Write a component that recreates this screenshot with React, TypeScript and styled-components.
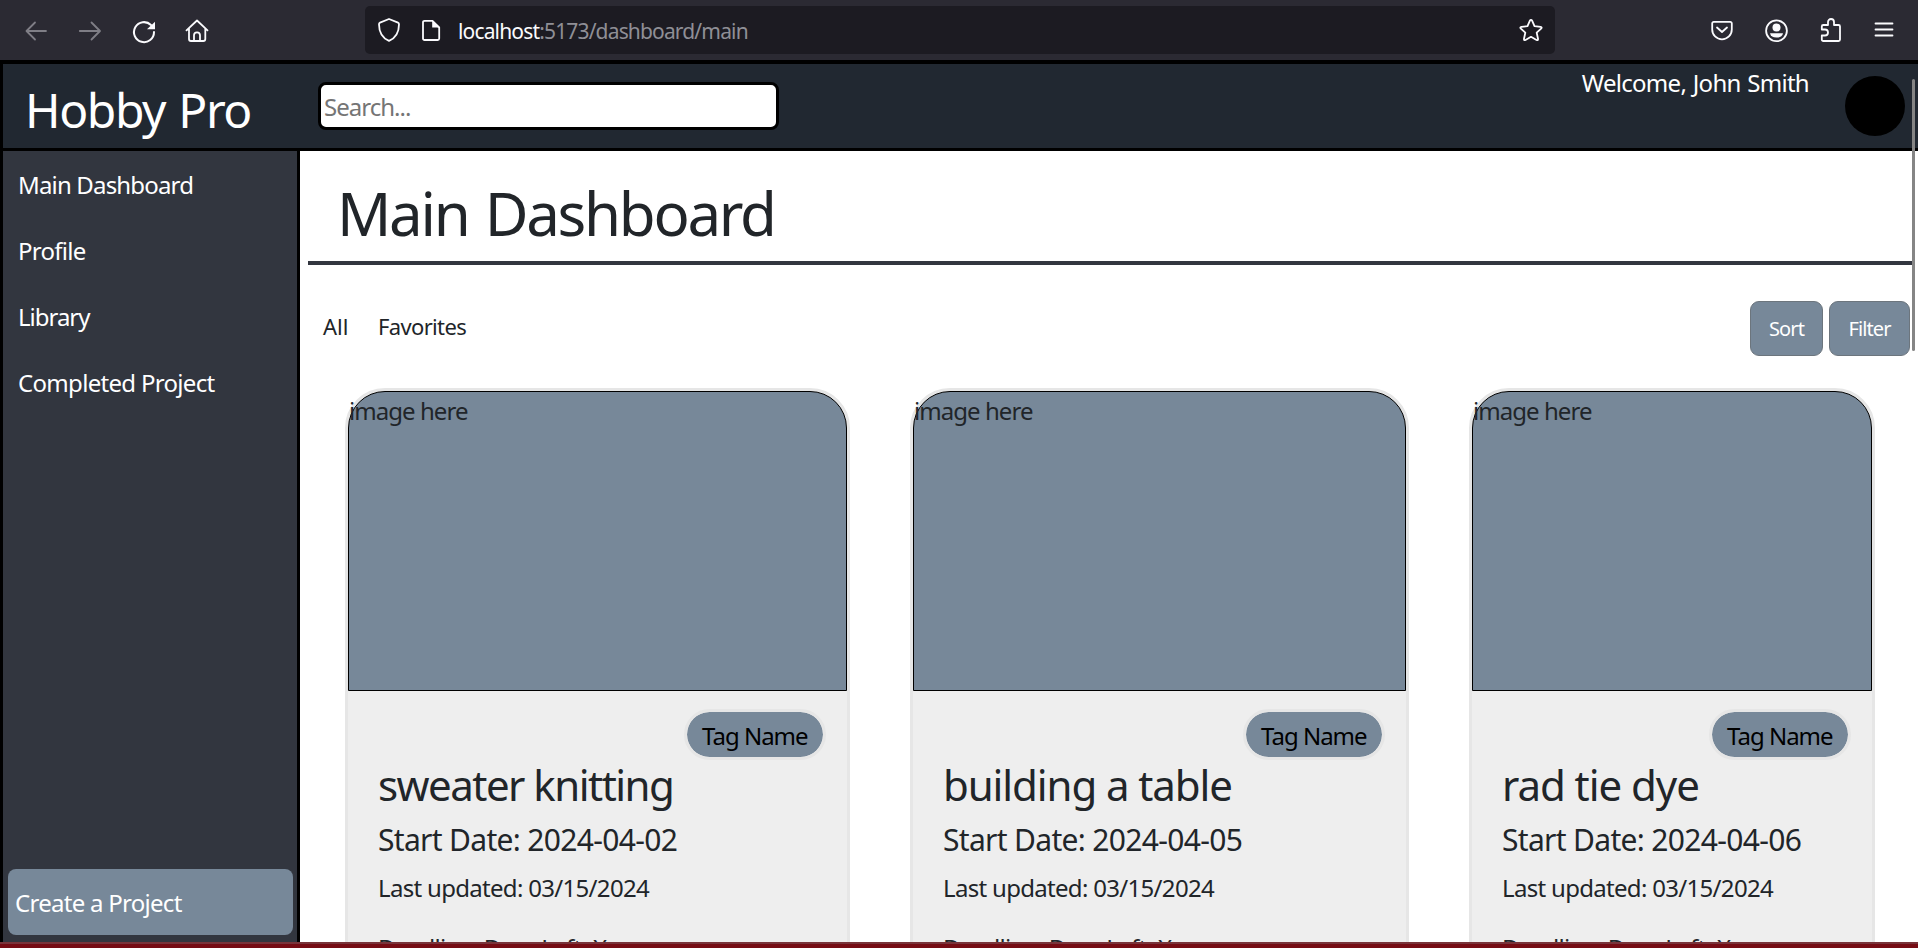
import React from 'react';
import styled, { createGlobalStyle } from 'styled-components';

const GlobalStyle = createGlobalStyle`
  *, *::before, *::after { box-sizing: border-box; }
  body {
    margin: 0;
    overflow: hidden;
    background: #fff;
    color: #212529;
    font-family: 'Noto Sans', 'Open Sans', sans-serif;
  }
  h1, h2, h3, p, ul { margin: 0; padding: 0; font-weight: 400; }
`;

const Window = styled.div`
  position: relative;
  display: flex;
  flex-direction: column;
  width: 1918px;
  height: 948px;
  overflow: hidden;
`;

/* Browser toolbar */
const Toolbar = styled.div`
  flex: none;
  display: flex;
  align-items: center;
  justify-content: space-between;
  height: 60px;
  padding: 0 22px 0 24px;
  background: #2b2a33;
`;

const IconGroup = styled.div`
  display: flex;
  gap: 30px;
`;

const Glyph = styled.svg<{ $dim?: boolean; $left?: number }>`
  flex: none;
  width: 24px;
  height: 24px;
  margin-left: ${(p) => p.$left ?? 0}px;
  overflow: visible;
  fill: none;
  stroke: ${(p) => (p.$dim ? '#7f7e86' : '#fbfbfe')};
  stroke-width: 1.8;
  stroke-linecap: round;
  stroke-linejoin: round;

  .solid { fill: #fbfbfe; stroke: none; }
`;

const AddressBar = styled.div`
  display: flex;
  align-items: center;
  width: 1190px;
  height: 48px;
  margin-right: -1px;
  padding: 0 12px;
  border-radius: 5px;
  background: #1c1b22;
`;

const Address = styled.div`
  flex: 1;
  padding: 1px 0 0 15px;
  font-size: 21px;
  line-height: 30px;
  letter-spacing: -0.84px;
  white-space: pre;
  color: #8f8f96;
`;

const Host = styled.span`
  color: #fbfbfe;
`;

/* Application frame */
const AppFrame = styled.div`
  flex: 1;
  min-height: 0;
  display: flex;
  flex-direction: column;
  border-top: 4px solid #000;
  border-left: 3px solid #000;
`;

const Header = styled.header`
  flex: none;
  display: flex;
  align-items: flex-start;
  height: 87px;
  border-bottom: 3px solid #000;
  background: #212831;
  color: #fff;
`;

const Brand = styled.div`
  width: 315px;
  padding: 4px 0 0 22px;
  font-size: 48px;
  line-height: 84px;
  letter-spacing: -1.4px;
  word-spacing: 2px;
`;

const SearchBox = styled.input`
  width: 461px;
  height: 48px;
  margin-top: 18px;
  padding: 1px 3px 0;
  border: 3px solid #000;
  border-radius: 8px;
  outline: none;
  background: #fff;
  font: 24px 'Noto Sans', sans-serif;
  letter-spacing: -0.98px;

  &::placeholder { color: #757575; opacity: 1; }
`;

const Account = styled.div`
  display: flex;
  gap: 36px;
  margin-left: auto;
  padding-right: 13px;
`;

const Welcome = styled.span`
  padding-top: 1px;
  font-size: 24px;
  line-height: 36px;
  letter-spacing: -0.7px;
  word-spacing: 1px;
`;

const Avatar = styled.div`
  width: 60px;
  height: 60px;
  margin-top: 12px;
  border-radius: 50%;
  background: #000;
`;

const Body = styled.div`
  flex: 1;
  min-height: 0;
  display: flex;
`;

const Sidebar = styled.nav`
  flex: none;
  display: flex;
  flex-direction: column;
  justify-content: space-between;
  width: 297px;
  padding: 1px 4px 7px 5px;
  border-right: 3px solid #000;
  background: #32363f;
`;

const NavList = styled.ul`
  list-style: none;
`;

const NavItem = styled.li<{ $track: number }>`
  height: 66px;
  padding-left: 10px;
  font-size: 24px;
  line-height: 66px;
  letter-spacing: ${(p) => p.$track}px;
  color: #fff;
`;

const CreateLink = styled.a`
  height: 66px;
  padding: 1px 7px 0;
  border-radius: 8px;
  background: #778899;
  color: #fff;
  font-size: 24px;
  line-height: 66px;
  letter-spacing: -0.72px;
`;

const Content = styled.main`
  flex: 1;
  min-width: 0;
  padding-left: 8px;
`;

const PageHeading = styled.div`
  width: 1604px;
  padding: 17px 0 3px 29px;
  border-bottom: 4px solid #32363f;
`;

const PageTitle = styled.h1`
  font-size: 60px;
  line-height: 90px;
  letter-spacing: -2.3px;
  word-spacing: 3px;
`;

const FilterRow = styled.div`
  display: flex;
  align-items: center;
  height: 55px;
  width: 1602px;
  margin-top: 36px;
  padding-left: 15px;
`;

const Tab = styled.span<{ $track: number; $width: number }>`
  width: ${(p) => p.$width}px;
  padding-bottom: 4px;
  font-size: 22px;
  line-height: 33px;
  letter-spacing: ${(p) => p.$track}px;
`;

const Actions = styled.div`
  display: flex;
  gap: 6px;
  margin-left: auto;
`;

const ActionButton = styled.button<{ $width: number }>`
  width: ${(p) => p.$width}px;
  height: 55px;
  padding: 0;
  border: 1px solid #6c757d;
  border-radius: 9px;
  background: #778899;
  color: #fff;
  font: 20px/30px 'Noto Sans', sans-serif;
  letter-spacing: -0.9px;
`;

const CardRow = styled.div`
  display: flex;
  gap: 60px;
  margin: 32px 0 0 37px;
`;

const Card = styled.article<{ $width: number }>`
  flex: none;
  width: ${(p) => p.$width}px;
  height: 640px;
  border: 3px solid #e6e6e6;
  border-radius: 40px;
  background: #eee;
`;

const CardImage = styled.div`
  height: 300px;
  padding-top: 1px;
  border: 1px solid #000;
  border-radius: 37px 37px 0 0;
  background: #778899;
  font-size: 24px;
  line-height: 36px;
  letter-spacing: -0.95px;
`;

const CardBody = styled.div`
  display: flex;
  flex-direction: column;
  padding: 18px 21px 0 30px;
`;

const Tag = styled.span`
  align-self: flex-end;
  width: 142px;
  height: 51px;
  padding: 2px 0 0 15px;
  border: 3px solid #e6e6e6;
  border-radius: 26px;
  background: #778899;
  background-clip: padding-box;
  color: #000;
  font-size: 24px;
  line-height: 43px;
  letter-spacing: -1px;
`;

const CardTitle = styled.h2<{ $track: number }>`
  font-size: 42px;
  line-height: 50px;
  letter-spacing: ${(p) => p.$track}px;
`;

const StartDate = styled.h3`
  margin-top: 12px;
  font-size: 30px;
  line-height: 36px;
  letter-spacing: -0.68px;
`;

const Detail = styled.p<{ $space: number }>`
  margin-top: ${(p) => p.$space}px;
  font-size: 24px;
  line-height: 36px;
  letter-spacing: -0.69px;
`;

const ScrollThumb = styled.div`
  position: absolute;
  top: 79px;
  right: 3px;
  width: 3px;
  height: 272px;
  border-radius: 2px;
  background: #858585;
`;

const BottomStrip = styled.div`
  flex: none;
  height: 6px;
  border-top: 2px solid #79343a;
  background: #760c14;
`;

const navItems = [
  { label: 'Main Dashboard', track: -0.83 },
  { label: 'Profile', track: -0.72 },
  { label: 'Library', track: -1.02 },
  { label: 'Completed Project', track: -0.69 },
];

const projects = [
  { name: 'sweater knitting', start: '2024-04-02', width: 505, track: -1.52 },
  { name: 'building a table', start: '2024-04-05', width: 499, track: -1.1 },
  { name: 'rad tie dye', start: '2024-04-06', width: 406, track: -1.05 },
];

const BrowserToolbar = () => (
  <Toolbar>
    <IconGroup>
      <Glyph $dim><path d="M22 13H3M11 4.5L2.5 13L11 21.5" /></Glyph>
      <Glyph $dim><path d="M1.8 13H21.5M13.5 4.5L22 13L13.5 21.5" /></Glyph>
      <Glyph>
        <path d="M22 14A10 10 0 1 1 19 7" strokeWidth="2" />
        <path className="solid" d="M23 3.8V11.2H15Z" />
      </Glyph>
      <Glyph $left={-1}>
        <path d="M1.5 12.3L12 2.5L22.5 12.3M4 10.5V21a2 2 0 0 0 2 2h12.3a2 2 0 0 0 2-2V10.5M9 23v-5.7a3 3 0 0 1 6 0V23" />
      </Glyph>
    </IconGroup>
    <AddressBar>
      <Glyph>
        <path d="M12 1L21 4.6Q22 5 22 6.2C22 15 18.5 20 12 22.9C5.5 20 2 15 2 6.2Q2 5 3 4.6Z" />
      </Glyph>
      <Glyph $left={18}>
        <path d="M5.5 2.8H13.5L20.2 9.5V20.5a1.5 1.5 0 0 1-1.5 1.5H5.5A1.5 1.5 0 0 1 4 20.5V4.3A1.5 1.5 0 0 1 5.5 2.8Z" />
        <path className="solid" d="M13.2 2.2V9.5H20.8Z" />
      </Glyph>
      <Address>
        <Host>localhost</Host>:5173/dashboard/main
      </Address>
      <Glyph>
        <path d="M12 1.8Q12.7 1.8 13.1 2.6L15.5 8.2L21.6 8.8Q23.4 9.2 22.1 10.7L17.7 14.7L19 20.8Q19.2 22.7 17.5 22L12 18.8L6.5 22Q4.8 22.7 5 20.8L6.3 14.7L1.9 10.7Q.6 9.2 2.4 8.8L8.5 8.2L10.9 2.6Q11.3 1.8 12 1.8Z" />
      </Glyph>
    </AddressBar>
    <IconGroup>
      <Glyph>
        <path d="M3.7 3.9h16.6a1.5 1.5 0 0 1 1.5 1.5v6.1a9.8 9.8 0 0 1-19.6 0V5.4a1.5 1.5 0 0 1 1.5-1.5zM7 9.5l5 4.5 5-4.5" />
      </Glyph>
      <Glyph>
        <circle cx="12.5" cy="12.8" r="10.4" />
        <circle className="solid" cx="12.5" cy="9.6" r="4" />
        <path className="solid" d="M6 15.2H19Q18 19.5 12.5 19.5T6 15.2Z" />
      </Glyph>
      <Glyph>
        <path d="M3.8 11.5V8.5A1.5 1.5 0 0 1 5.3 7H10V4a3 3 0 0 1 6 0V7h4.5A1.5 1.5 0 0 1 22 8.5V21.5A1.5 1.5 0 0 1 20.5 23H5.3A1.5 1.5 0 0 1 3.8 21.5V17.5H7a3 3 0 0 0 0-6Z" />
      </Glyph>
      <Glyph><path d="M3.5 5.5H20.5M3.5 11.5H20.5M3.5 17.5H20.5" /></Glyph>
    </IconGroup>
  </Toolbar>
);

const ProjectCard = ({ name, start, width, track }: (typeof projects)[number]) => (
  <Card $width={width}>
    <CardImage>image here</CardImage>
    <CardBody>
      <Tag>Tag Name</Tag>
      <CardTitle $track={track}>{name}</CardTitle>
      <StartDate>Start Date: {start}</StartDate>
      <Detail $space={12}>Last updated: 03/15/2024</Detail>
      <Detail $space={24}>Deadline: Days Left: X</Detail>
    </CardBody>
  </Card>
);

export default function App() {
  return (
    <Window>
      <GlobalStyle />
      <BrowserToolbar />
      <AppFrame>
        <Header>
          <Brand>Hobby Pro</Brand>
          <SearchBox placeholder="Search..." />
          <Account>
            <Welcome>Welcome, John Smith</Welcome>
            <Avatar />
          </Account>
        </Header>
        <Body>
          <Sidebar>
            <NavList>
              {navItems.map((item) => (
                <NavItem key={item.label} $track={item.track}>{item.label}</NavItem>
              ))}
            </NavList>
            <CreateLink>Create a Project</CreateLink>
          </Sidebar>
          <Content>
            <PageHeading>
              <PageTitle>Main Dashboard</PageTitle>
            </PageHeading>
            <FilterRow>
              <Tab $track={0} $width={55}>All</Tab>
              <Tab $track={-0.65} $width={100}>Favorites</Tab>
              <Actions>
                <ActionButton $width={73}>Sort</ActionButton>
                <ActionButton $width={81}>Filter</ActionButton>
              </Actions>
            </FilterRow>
            <CardRow>
              {projects.map((project) => (
                <ProjectCard key={project.name} {...project} />
              ))}
            </CardRow>
          </Content>
        </Body>
      </AppFrame>
      <BottomStrip />
      <ScrollThumb />
    </Window>
  );
}
